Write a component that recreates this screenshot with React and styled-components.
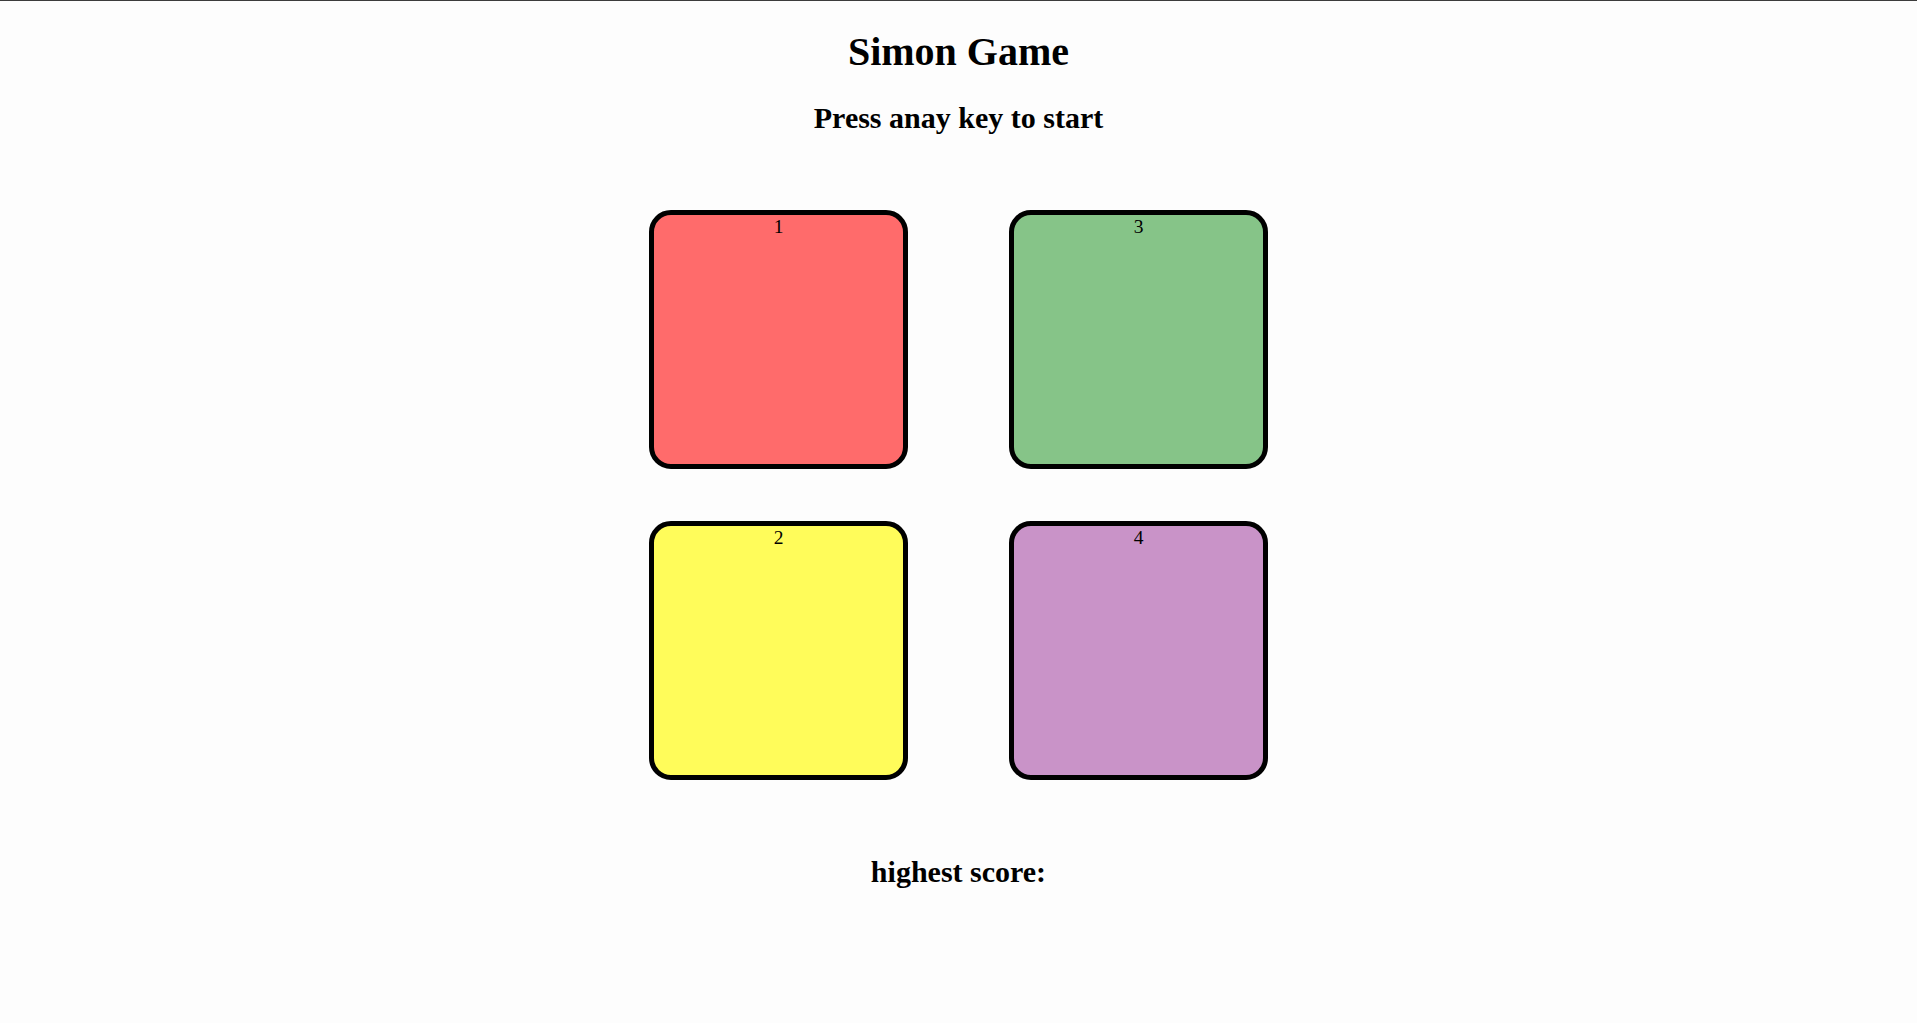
import styled, { createGlobalStyle } from 'styled-components'

const GlobalStyle = createGlobalStyle`
  html, body {
    margin: 0;
    padding: 0;
    background: #fdfdfd;
  }
  body {
    border-top: 1px solid #3c3c3c;
    font-family: "Liberation Serif", "Times New Roman", serif;
    color: #000;
  }
`

const Page = styled.div`
  display: flex;
  flex-direction: column;
  align-items: center;
  text-align: center;
`
const Title = styled.h1`
  margin: 29px 0 0;
  font-size: 40px;
  line-height: 43px;
  font-weight: bold;
`
const Subtitle = styled.h2`
  margin: ${(p) => p.$top}px 0 0;
  font-size: 30px;
  line-height: 32px;
  font-weight: bold;
`
const Board = styled.div`
  display: flex;
  gap: 101px;
  margin-top: 76px;
`
const Column = styled.div`
  display: flex;
  flex-direction: column;
  gap: 52px;
`
const Pad = styled.div`
  box-sizing: border-box;
  width: 259px;
  height: 259px;
  padding-top: 1px;
  border: 5px solid #000;
  border-radius: 22px;
  background: ${(p) => p.$color};
  font-size: 19.5px;
  line-height: 22px;
  cursor: pointer;
`

const columns = [
  [
    { id: 1, color: '#ff6b6b' },
    { id: 2, color: '#fffc5a' },
  ],
  [
    { id: 3, color: '#86c488' },
    { id: 4, color: '#c993c8' },
  ],
]

export default function App() {
  return (
    <>
      <GlobalStyle />
      <Page>
        <Title>Simon Game</Title>
        <Subtitle $top={29}>Press anay key to start</Subtitle>

        <Board>
          {columns.map((col, i) => (
            <Column key={i}>
              {col.map((pad) => (
                <Pad key={pad.id} $color={pad.color}>
                  {pad.id}
                </Pad>
              ))}
            </Column>
          ))}
        </Board>

        <Subtitle $top={76}>highest score:</Subtitle>
      </Page>
    </>
  )
}
